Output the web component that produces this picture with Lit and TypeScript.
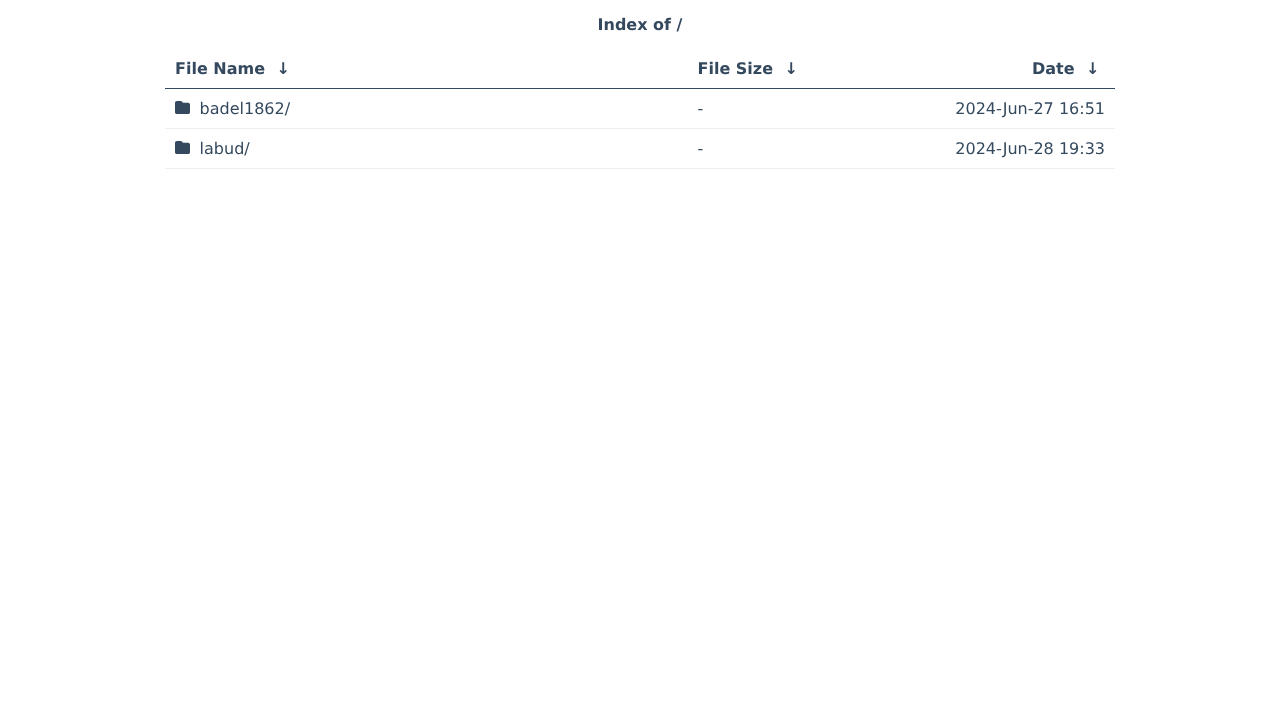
import { LitElement, html, css } from "lit";
import { customElement } from "lit/decorators.js";

const rows = [
  { name: "badel1862/", size: "-", date: "2024-Jun-27 16:51" },
  { name: "labud/", size: "-", date: "2024-Jun-28 19:33" },
];

@customElement("app-root")
export class AppRoot extends LitElement {
  static styles = css`
    :host {
      display: block;
      font-family: "DejaVu Sans", sans-serif;
      font-size: 16px;
      color: #34495e;
      min-height: 720px;
      text-rendering: geometricPrecision;
      will-change: transform;
    }
    h1 {
      margin: 0;
      padding-top: 15px;
      font-size: 16px;
      line-height: 19px;
      font-weight: 700;
      text-align: center;
    }
    .table {
      width: 950px;
      margin: 15px auto 0;
    }
    .row {
      display: grid;
      grid-template-columns: 522.5px 1fr auto;
      height: 39px;
      align-items: center;
      padding: 0 10px;
      border-bottom: 1px solid #eeeff3;
    }
    .head {
      font-weight: 700;
      border-bottom-color: #34495e;
    }
    .right { text-align: right; }
    .arrow { margin-left: 6px; padding-right: 5.5px; }
    .name { display: flex; align-items: center; gap: 9.6px; }
    svg { width: 15px; height: 15px; fill: currentColor; display: block; margin-top: -1px; margin-bottom: 1px; }
  `;

  render() {
    return html`
      <h1>Index of /</h1>
      <div class="table">
        <div class="row head">
          <div>File Name <span class="arrow">↓</span></div>
          <div>File Size <span class="arrow">↓</span></div>
          <div class="right">Date <span class="arrow">↓</span></div>
        </div>
        ${rows.map(
          (r) => html`
            <div class="row">
              <div class="name">
                <svg viewBox="0 0 512 512"><path d="M64 480H448c35.300 0 64-28.700 64-64V160c0-35.300-28.700-64-64-64H288c-10.100 0-19.600-4.700-25.600-12.800L243.200 57.600C231.100 41.500 212.100 32 192 32H64C28.700 32 0 60.700 0 96V416c0 35.300 28.700 64 64 64z"/></svg>
                <span>${r.name}</span>
              </div>
              <div>${r.size}</div>
              <div class="right">${r.date}</div>
            </div>
          `
        )}
      </div>
    `;
  }
}
